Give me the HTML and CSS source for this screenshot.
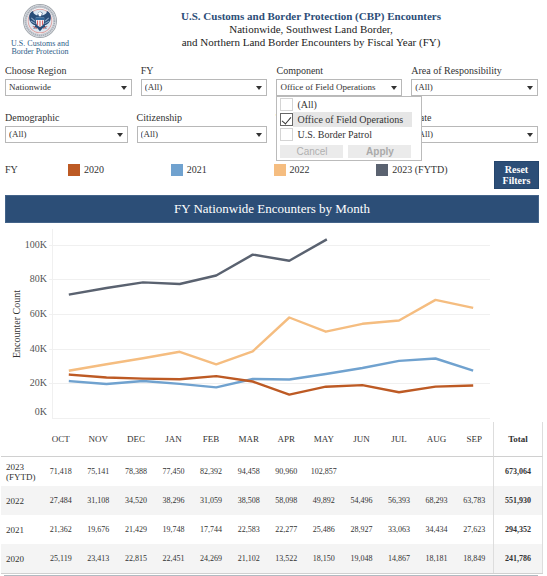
FILE: index.html
```html
<!DOCTYPE html>
<html lang="en">
<head>
<meta charset="utf-8">
<meta name="viewport" content="width=device-width, initial-scale=1">
<title>CBP Nationwide Encounters</title>
<link rel="stylesheet" href="styles.css">
</head>
<body>
<header class="header">
  <div class="brand">
    <svg class="seal" viewBox="0 0 66 66" aria-hidden="true">
      <circle cx="33" cy="33" r="32" fill="#fff" stroke="#a3a8ae" stroke-width="2"/>
      <circle cx="33" cy="33" r="28" fill="none" stroke="#ccd0d6" stroke-width="6"/>
      <circle cx="33" cy="33" r="28" fill="none" stroke="#a4abb5" stroke-width="3" stroke-dasharray="2 2"/>
      <circle cx="33" cy="33" r="23" fill="#dce8f2" stroke="#dca5a5" stroke-width="2"/>
      <path d="M12 28C11 21 14 16 20 13C19 18 23 21 28 22L29 18C31 14 36 14 38 18L37 22C43 21 47 18 46 13C52 16 55 21 54 28C53 35 48 40 42 41L46 48L39 46L33 53L27 46L20 48L24 41C18 40 13 35 12 28Z" fill="#284d78"/>
      <path d="M29 18Q33 13 37 18L35 24H31Z" fill="#fff"/>
      <path d="M16 27L23 33M15 33L24 38M50 27L43 33M51 33L42 38" stroke="#88a6c5" stroke-width="2"/>
      <path d="M25 26H41V34Q41 41 33 45Q25 41 25 34Z" fill="#eef2f6"/>
      <path d="M25 26H41V31H25Z" fill="#2f6698"/>
      <path d="M28 32V41M33 32V44M38 32V41" stroke="#d85c60" stroke-width="2"/>
      <path d="M19 43L27 48M47 43L39 48" stroke="#d27b7b" stroke-width="2"/>
    </svg>
    <span>U.S. Customs and<br>Border Protection</span>
  </div>
  <h1 class="title"><strong>U.S. Customs and Border Protection (CBP) Encounters</strong><br>Nationwide, Southwest Land Border,<br>and Northern Land Border Encounters by Fiscal Year (FY)</h1>
</header>

<main>
  <form class="filters">
    <div class="field"><label for="region">Choose Region</label><div class="pick"><select id="region"><option>Nationwide</option></select></div></div>
    <div class="field"><label for="fy">FY</label><div class="pick"><select id="fy"><option>(All)</option></select></div></div>
    <div class="field"><label for="component">Component</label><div class="pick"><select id="component"><option>Office of Field Operations</option></select></div>
      <div class="menu">
        <label class="choice"><input type="checkbox"><span>(All)</span></label>
        <label class="choice chosen"><input type="checkbox" checked><span>Office of Field Operations</span></label>
        <label class="choice"><input type="checkbox"><span>U.S. Border Patrol</span></label>
        <div class="actions"><button type="button" disabled>Cancel</button><button type="button" class="apply" disabled>Apply</button></div>
      </div>
    </div>
    <div class="field"><label for="area">Area of Responsibility</label><div class="pick"><select id="area"><option>(All)</option></select></div></div>
  </form>
  <form class="filters second">
    <div class="field"><label for="demo">Demographic</label><div class="pick"><select id="demo"><option>(All)</option></select></div></div>
    <div class="field"><label for="citizen">Citizenship</label><div class="pick"><select id="citizen"><option>(All)</option></select></div></div>
    <div class="field"><label for="authority">Title</label><div class="pick"><select id="authority"><option>(All)</option></select></div></div>
    <div class="field"><label for="state">State</label><div class="pick"><select id="state"><option>(All)</option></select></div></div>
  </form>

  <div class="legend">
    <span>FY</span>
    <ul class="keys">
      <li><i class="swatch y2020"></i>2020</li>
      <li><i class="swatch y2021"></i>2021</li>
      <li><i class="swatch y2022"></i>2022</li>
      <li><i class="swatch y2023"></i>2023 (FYTD)</li>
    </ul>
    <button type="button" class="reset">Reset Filters</button>
  </div>

  <h2 class="banner">FY Nationwide Encounters by Month</h2>

  <svg class="chart" viewBox="0 0 547 199" role="img" aria-label="Encounters by month">
    <g class="grid">
      <path d="M49 22.5H490M49 56.5H490M49 91.5H490M49 126.5H490M49 160.5H490M52 195.5H490M52.5 6V195"/>
    </g>
    <g class="ticks">
      <text x="47" y="25">100K</text><text x="47" y="59">80K</text><text x="47" y="94">60K</text><text x="47" y="129">40K</text><text x="47" y="163">20K</text><text x="47" y="192">0K</text>
    </g>
    <text class="axis" transform="translate(20 101) rotate(-90)">Encounter Count</text>
    <g class="lines">
      <polyline class="l2023" points="70,71.4 106.5,65 143,59.4 179.7,61 216.2,52.5 252.7,31.6 289.3,37.7 325.8,17"/>
      <polyline class="l2022" points="70,147.5 106.5,141.2 143,135.3 179.7,128.8 216.2,141.3 252.7,128.4 289.3,94.5 325.8,108.7 362.4,100.8 399,97.5 435.5,76.9 472,84.7"/>
      <polyline class="l2021" points="70,158.1 106.5,161 143,158 179.7,160.9 216.2,164.4 252.7,156 289.3,156.5 325.8,151 362.4,145 399,137.9 435.5,135.5 472,147.3"/>
      <polyline class="l2020" points="70,151.6 106.5,154.5 143,155.6 179.7,156.2 216.2,153.1 252.7,158.5 289.3,171.6 325.8,163.7 362.4,162.1 399,169.3 435.5,163.6 472,162.5"/>
    </g>
  </svg>

  <div class="sheet">
  <table>
    <colgroup><col class="c-year"><col span="12"><col class="c-total"></colgroup>
    <thead><tr><td></td><th>OCT</th><th>NOV</th><th>DEC</th><th>JAN</th><th>FEB</th><th>MAR</th><th>APR</th><th>MAY</th><th>JUN</th><th>JUL</th><th>AUG</th><th>SEP</th><th class="total">Total</th></tr></thead>
    <tbody>
      <tr><th>2023 (FYTD)</th><td>71,418</td><td>75,141</td><td>78,388</td><td>77,450</td><td>82,392</td><td>94,458</td><td>90,960</td><td>102,857</td><td></td><td></td><td></td><td></td><td class="total">673,064</td></tr>
      <tr><th>2022</th><td>27,484</td><td>31,108</td><td>34,520</td><td>38,296</td><td>31,059</td><td>38,508</td><td>58,098</td><td>49,892</td><td>54,496</td><td>56,393</td><td>68,293</td><td>63,783</td><td class="total">551,930</td></tr>
      <tr><th>2021</th><td>21,362</td><td>19,676</td><td>21,429</td><td>19,748</td><td>17,744</td><td>22,583</td><td>22,277</td><td>25,486</td><td>28,927</td><td>33,063</td><td>34,434</td><td>27,623</td><td class="total">294,352</td></tr>
      <tr><th>2020</th><td>25,119</td><td>23,413</td><td>22,815</td><td>22,451</td><td>24,269</td><td>21,102</td><td>13,522</td><td>18,150</td><td>19,048</td><td>14,867</td><td>18,181</td><td>18,849</td><td class="total">241,786</td></tr>
    </tbody>
  </table>
  </div>
  <hr>
</main>
</body>
</html>
```

FILE: styles.css
```css
* { box-sizing: border-box; }
body {
  margin: 0;
  background: #fff;
  color: #333;
  font: 10px/13px "Liberation Serif", "Times New Roman", serif;
}
select, button, input { font: inherit; color: inherit; margin: 0; }

.header { display: grid; grid-template-columns: 80px 1fr 5px; height: 62px; }
.brand { display: flex; flex-direction: column; align-items: center; padding-top: 4px; color: #2e5d88; font-size: 8px; line-height: 8px; text-align: center; white-space: nowrap; }
.seal { width: 34px; height: 34px; margin-bottom: 2px; }
.title { margin: 0; padding-top: 10px; font-size: 11px; line-height: 13px; font-weight: 400; text-align: center; color: #222; }
.title strong { color: #2c4e78; }

.filters { display: grid; grid-template-columns: 127fr 127fr 126fr 127fr; column-gap: 9px; margin: 0 9px 0 5px; padding-top: 2px; }
.second { grid-template-columns: 123fr 131fr 127fr 127fr; padding-top: 15px; }
.field { position: relative; min-width: 0; }
.field > label { display: block; height: 15px; white-space: nowrap; }
.pick { position: relative; }
.pick::after { content: ""; position: absolute; right: 5px; top: 7px; border: 3px solid transparent; border-top: 4px solid #333; border-bottom: 0; pointer-events: none; }
select { display: block; width: 100%; height: 17px; padding: 0 3px; appearance: none; border: 1px solid #b8b8b8; border-radius: 0; background: #fff; font-size: 9px; line-height: 15px; }

.menu { position: absolute; z-index: 2; left: 0; top: 32px; width: 146px; height: 65px; padding: 0 3px; border: 1px solid #bbb; background: #fff; }
.choice { display: flex; align-items: center; width: 132px; height: 15px; white-space: nowrap; }
.choice span { flex: 1; padding-left: 4px; line-height: 15px; }
.chosen span { background: #e6e6e6; }
.choice input { flex: none; appearance: none; width: 13px; height: 13px; border: 1px solid #d4d4d4; background: #fff; }
.choice input:checked { display: grid; place-items: center; border-color: #666; }
.choice input:checked::before { content: ""; width: 4px; height: 8px; border: solid #333; border-width: 0 1px 1px 0; transform: rotate(40deg); }
.actions { display: flex; gap: 5px; margin-top: 3px; }
.actions button { width: 63px; height: 13px; padding: 0; border: 0; background: #ebebeb; color: #b0b0b0; font: 10px/13px "Liberation Sans", Arial, sans-serif; }
.actions .apply { font-weight: 700; color: #aaa; }

.legend { display: grid; grid-template-columns: 63px 1fr 45px; align-items: start; margin: 18px 8px 0 5px; line-height: 18px; }
.keys { display: grid; grid-template-columns: repeat(4, 1fr); margin: 0 15px 0 0; padding: 0; list-style: none; }
.keys li { display: flex; align-items: center; gap: 4px; white-space: nowrap; }
.swatch { width: 12px; height: 12px; }
.y2020 { background: #bd5a24; }
.y2021 { background: #70a2cf; }
.y2022 { background: #f5bd80; }
.y2023 { background: #5a6270; }
.reset { height: 28px; padding: 0 4px; border: 1px solid #25466d; background: #2c4e77; color: #fff; font-weight: 700; font-size: 10px; line-height: 11px; }

.banner { margin: 6px 8px 0 5px; border: 1px solid #436389; background: #2c4e77; color: #fff; font-size: 13px; line-height: 26px; font-weight: 400; text-align: center; }

.chart { display: block; width: 100%; height: auto; }
.chart text { fill: #555; font-size: 10px; }
.ticks { text-anchor: end; }
.chart .axis { fill: #333; text-anchor: middle; }
.grid path { fill: none; stroke: #f0f0f0; }
.lines { fill: none; stroke-width: 2.4; stroke-linecap: square; stroke-linejoin: round; }
.l2020 { stroke: #bd5a24; }
.l2021 { stroke: #70a2cf; }
.l2022 { stroke: #f5bd80; }
.l2023 { stroke: #5a6270; }

.sheet { margin: 0 4px 0 1px; }
table { width: 100%; table-layout: fixed; border-collapse: separate; border-spacing: 0; border-bottom: 1px solid #d0d0d0; }
.c-year { width: 41px; }
.c-total { width: 50px; }
th, td { height: 29px; padding: 0; text-align: center; font-weight: 400; font-size: 8px; line-height: 10px; }
thead th, thead td { height: 35px; border-bottom: 1px solid #d0d0d0; font-size: 9px; }
tbody th { padding-left: 5px; text-align: left; font-size: 9px; }
tbody tr:nth-child(even) { background: #f4f4f4; }
.total { border-left: 1px solid #ddd; border-right: 1px solid #ddd; font-weight: 700; }
hr { margin: 1px 9px 0 4px; border: 0; border-top: 1px solid #b0bac1; }
```
